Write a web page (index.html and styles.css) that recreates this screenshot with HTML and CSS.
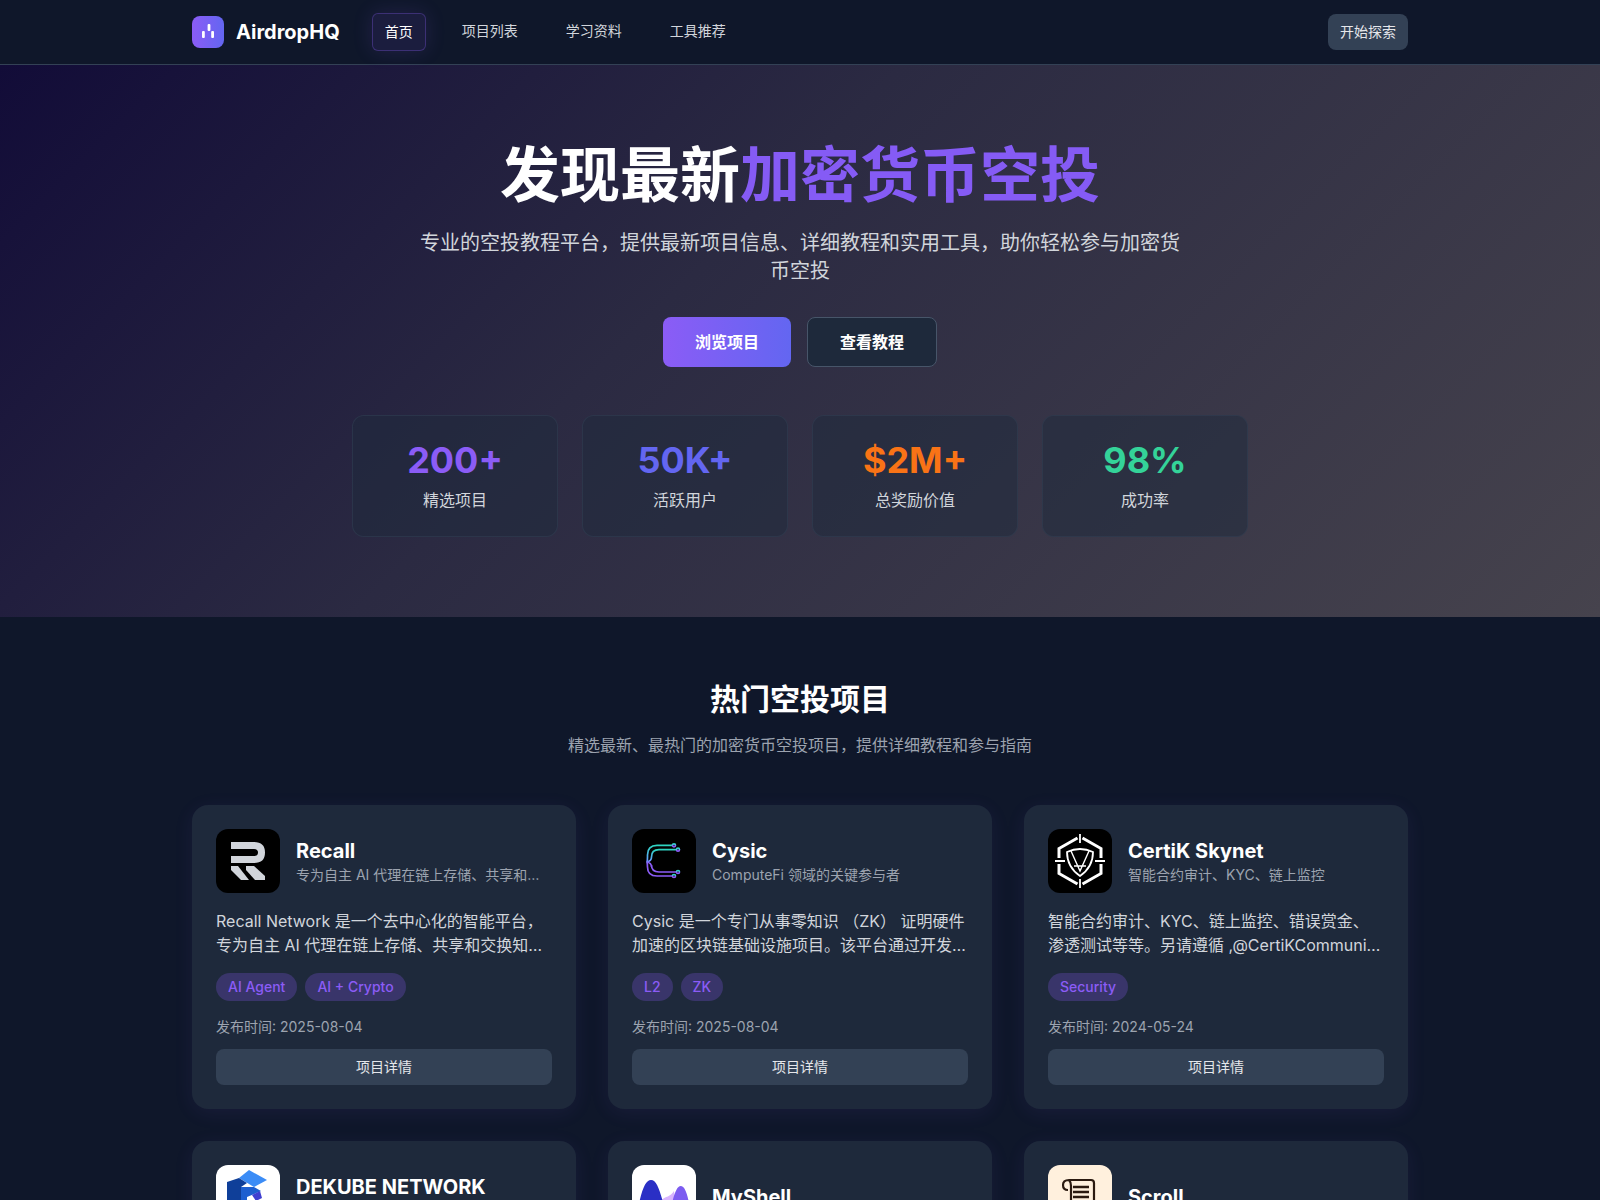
FILE: index.html
```html
<!DOCTYPE html>
<html lang="zh-CN">
<head>
  <meta charset="UTF-8">
  <meta name="viewport" content="width=device-width, initial-scale=1.0">
  <title>AirdropHQ</title>
  <link rel="stylesheet" href="styles.css">
</head>
<body>

  <nav class="topbar">
    <div class="container topbar-inner">
      <a class="brand" href="#">
        <span class="brand-mark">
          <svg viewBox="0 0 32 32" width="32" height="32">
            <rect x="10" y="15" width="2.8" height="7" rx="1" fill="#fff"/>
            <rect x="15.6" y="8" width="2.8" height="7" rx="1" fill="#fff"/>
            <rect x="19.2" y="15" width="2.8" height="7" rx="1" fill="#fff"/>
          </svg>
        </span>
        <span class="brand-name">AirdropHQ</span>
      </a>
      <div class="nav-links">
        <a class="nav-link active" href="#">首页</a>
        <a class="nav-link" href="#">项目列表</a>
        <a class="nav-link" href="#">学习资料</a>
        <a class="nav-link" href="#">工具推荐</a>
      </div>
      <a class="nav-cta" href="#">开始探索</a>
    </div>
  </nav>

  <header class="hero">
    <h1 class="hero-title">发现最新<span class="accent">加密货币空投</span></h1>
    <p class="hero-sub">专业的空投教程平台，提供最新项目信息、详细教程和实用工具，助你轻松参与加密货币空投</p>
    <div class="hero-actions">
      <a class="btn btn-primary" href="#">浏览项目</a>
      <a class="btn btn-dark" href="#">查看教程</a>
    </div>
    <div class="stats">
      <div class="stat"><div class="stat-num purple">200+</div><div class="stat-label">精选项目</div></div>
      <div class="stat"><div class="stat-num indigo">50K+</div><div class="stat-label">活跃用户</div></div>
      <div class="stat"><div class="stat-num orange">$2M+</div><div class="stat-label">总奖励价值</div></div>
      <div class="stat"><div class="stat-num green">98%</div><div class="stat-label">成功率</div></div>
    </div>
  </header>

  <main class="projects">
    <div class="container">
      <h2 class="section-title">热门空投项目</h2>
      <p class="section-sub">精选最新、最热门的加密货币空投项目，提供详细教程和参与指南</p>

      <div class="card-grid">

        <article class="card">
          <div class="card-head">
            <span class="icon icon-black">
              <svg viewBox="0 0 64 64" width="64" height="64">
                <path d="M15 16.5H38Q45.500 16.500 45.500 23.500T38 30.500H15" fill="none" stroke="#d1d5db" stroke-width="7"/>
                <path d="M15 37H22L33 51H25L15 41Z" fill="#d1d5db"/>
                <path d="M30 37H38L49 47V51H39L30 41Z" fill="#d1d5db"/>
              </svg>
            </span>
            <div class="card-titles">
              <h3 class="card-name">Recall</h3>
              <p class="card-tagline">专为自主 AI 代理在链上存储、共享和交换知识与数据</p>
            </div>
          </div>
          <p class="card-desc">Recall Network 是一个去中心化的智能平台，专为自主 AI 代理在链上存储、共享和交换知识与数据而设计，让代理之间可以协作。</p>
          <div class="tags"><span class="tag">AI Agent</span><span class="tag">AI + Crypto</span></div>
          <p class="card-date">发布时间: 2025-08-04</p>
          <a class="card-btn" href="#">项目详情</a>
        </article>

        <article class="card">
          <div class="card-head">
            <span class="icon icon-black">
              <svg viewBox="0 0 64 64" width="64" height="64">
                <defs>
                  <linearGradient id="cysic" x1="0" y1="0" x2="0" y2="1">
                    <stop offset="0" stop-color="#2dd4bf"/>
                    <stop offset="0.45" stop-color="#60a5fa"/>
                    <stop offset="0.6" stop-color="#8b5cf6"/>
                    <stop offset="1" stop-color="#8b5cf6"/>
                  </linearGradient>
                </defs>
                <g fill="none" stroke="url(#cysic)" stroke-width="1.700">
                  <path d="M40.500 16.300H25Q15.500 16.300 15.500 26V28Q15.500 31 15 33Q15.500 35 15.500 38V38Q15.500 47 25 47H40.500"/>
                  <path d="M44.500 20.700H27Q19.500 20.700 19.500 28V28Q19.500 32 15 33Q19.500 34 19.500 38V36Q19.500 43 27 43H44.500"/>
                  <circle cx="42" cy="16.300" r="1.500"/>
                  <circle cx="46" cy="20.700" r="1.500"/>
                  <circle cx="46" cy="43" r="1.500"/>
                  <circle cx="42" cy="47" r="1.500"/>
                </g>
              </svg>
            </span>
            <div class="card-titles">
              <h3 class="card-name">Cysic</h3>
              <p class="card-tagline">ComputeFi 领域的关键参与者</p>
            </div>
          </div>
          <p class="card-desc">Cysic 是一个专门从事零知识 （ZK） 证明硬件加速的区块链基础设施项目。该平台通过开发专用硬件和分布式算力网络来提升证明效率。</p>
          <div class="tags"><span class="tag">L2</span><span class="tag">ZK</span></div>
          <p class="card-date">发布时间: 2025-08-04</p>
          <a class="card-btn" href="#">项目详情</a>
        </article>

        <article class="card">
          <div class="card-head">
            <span class="icon icon-black">
              <svg viewBox="0 0 64 64" width="64" height="64">
                <g fill="none" stroke="#fff" stroke-width="3">
                  <path d="M29.500 9L11 19.500V29M34.500 9L53 19.500V29M11 35V44.500L29.500 55M53 35V44.500L34.500 55"/>
                  <path d="M32 5V14M32 50V59M7 32H17M47 32H57" stroke-width="1.800"/>
                </g>
                <g fill="none" stroke="#fff" stroke-width="1.800">
                  <path d="M19 23Q32 17 45 23Q45 38 32 47Q19 38 19 23Z"/>
                  <path d="M23 22L32 42L41 22M26 37H38" stroke-width="1.400"/>
                </g>
              </svg>
            </span>
            <div class="card-titles">
              <h3 class="card-name">CertiK Skynet</h3>
              <p class="card-tagline">智能合约审计、KYC、链上监控</p>
            </div>
          </div>
          <p class="card-desc">智能合约审计、KYC、链上监控、错误赏金、渗透测试等等。另请遵循 ,@CertiKCommunity 了解更多安全资讯和项目动态。</p>
          <div class="tags"><span class="tag">Security</span></div>
          <p class="card-date">发布时间: 2024-05-24</p>
          <a class="card-btn" href="#">项目详情</a>
        </article>

        <article class="card">
          <div class="card-head">
            <span class="icon icon-white">
              <svg viewBox="0 0 64 64" width="64" height="64">
                <path d="M33 5L51 15L38 22L23 13Z" fill="#3b8cf6"/>
                <path d="M11 17L23 13L31 18L25 22V52L11 45Z" fill="#0f3f99"/>
                <path d="M25 22L38 22L45 26L31 32V54L25 52Z" fill="#1d5fd0"/>
                <path d="M36 30L44 26L46 33L40 36Z" fill="#3f3fd0"/>
              </svg>
            </span>
            <div class="card-titles">
              <h3 class="card-name">DEKUBE NETWORK</h3>
              <p class="card-tagline">&nbsp;</p>
            </div>
          </div>
        </article>

        <article class="card">
          <div class="card-head">
            <span class="icon icon-white">
              <svg viewBox="0 0 64 64" width="64" height="64">
                <path d="M26 40C31 30 37 34 42 26L46 64H34Z" fill="#d8b4fe"/>
                <path d="M2 64C8 30 12 15 19 15C27 15 30 35 38 64Z" fill="#2a2fc5"/>
                <path d="M34 64C40 38 43 21 48.700 21C55 21 57 38 62 64Z" fill="#7c5cf0"/>
              </svg>
            </span>
            <div class="card-titles">
              <h3 class="card-name">MyShell</h3>
            </div>
          </div>
        </article>

        <article class="card">
          <div class="card-head">
            <span class="icon icon-cream">
              <svg viewBox="0 0 64 64" width="64" height="64">
                <g fill="none" stroke="#2b1a10" stroke-width="2.200">
                  <path d="M21 15H43Q46 15 46 18V44Q46 50 40 50H20"/>
                  <path d="M21 15Q15 15 15 20Q15 25 20 25M21 15Q23 17 23 21V44Q23 50 18 50"/>
                  <path d="M25 22H41M25 27H41M25 32H41" stroke-width="2.400"/>
                </g>
              </svg>
            </span>
            <div class="card-titles">
              <h3 class="card-name">Scroll</h3>
            </div>
          </div>
        </article>

      </div>
    </div>
  </main>

</body>
</html>
```

FILE: styles.css
```css
* {
  box-sizing: border-box;
}
html, body {
  height: 100%;
}
body {
  margin: 0;
  overflow: hidden;
  background: #0f172a;
  color: #fff;
  font-family: Inter, "Noto Sans CJK SC", sans-serif;
  font-size: 16px;
  line-height: 24px;
}
h1, h2, h3, p {
  margin: 0;
}
a {
  color: inherit;
  text-decoration: none;
}
.container {
  width: 1216px;
  margin: 0 auto;
}

/* top bar */
.topbar {
  height: 65px;
  background: #0f172a;
  border-bottom: 1px solid #334155;
}
.topbar-inner {
  height: 64px;
  display: flex;
  align-items: center;
}
.brand {
  display: flex;
  align-items: center;
  gap: 12px;
}
.brand-mark {
  width: 32px;
  height: 32px;
  display: block;
  border-radius: 8px;
  background: linear-gradient(to right, #8b5cf6, #6366f1);
}
.brand-mark svg {
  display: block;
}
.brand-name {
  font-size: 20px;
  line-height: 28px;
  font-weight: 700;
}
.nav-links {
  display: flex;
  align-items: flex-start;
  gap: 24px;
  margin-left: 32px;
}
.nav-link {
  padding: 8px 12px;
  font-size: 14px;
  line-height: 20px;
  color: #d1d5db;
  border-radius: 6px;
}
.nav-link.active {
  color: #fff;
  background: rgba(139, 92, 246, 0.1);
  border: 1px solid rgba(139, 92, 246, 0.3);
  box-shadow: 0 0 20px rgba(139, 92, 246, 0.15);
}
.nav-cta {
  margin-left: auto;
  padding: 8px 12px;
  font-size: 14px;
  line-height: 20px;
  color: #e5e7eb;
  background: #334155;
  border-radius: 8px;
}

/* hero */
.hero {
  height: 552px;
  padding-top: 80px;
  background: linear-gradient(135deg, #120c38 0%, #2b2a42 42%, #46434d 100%);
  display: flex;
  flex-direction: column;
  align-items: center;
}
.hero-title {
  font-size: 60px;
  line-height: 60px;
  font-weight: 700;
  margin-bottom: 24px;
}
.accent {
  color: #855bf5;
}
.hero-sub {
  width: 768px;
  font-size: 20px;
  line-height: 28px;
  text-align: center;
  color: #d1d5db;
  margin-bottom: 32px;
}
.hero-actions {
  display: flex;
  gap: 16px;
  margin-bottom: 48px;
}
.btn {
  padding: 13px 32px;
  font-weight: 600;
  border-radius: 8px;
  color: #fff;
}
.btn-primary {
  background: linear-gradient(to right, #8b5cf6, #6366f1);
}
.btn-dark {
  background: #1e293b;
  border: 1px solid #475569;
  padding: 12px 32px;
}
.stats {
  width: 896px;
  display: grid;
  grid-template-columns: repeat(4, 1fr);
  gap: 24px;
}
.stat {
  padding: 24px;
  text-align: center;
  background: rgba(30, 41, 59, 0.5);
  border: 1px solid rgba(51, 65, 85, 0.5);
  border-radius: 12px;
}
.stat-num {
  font-size: 36px;
  line-height: 40px;
  font-weight: 700;
  margin-bottom: 8px;
}
.stat-label {
  color: #d1d5db;
}
.purple { color: #8b5cf6; }
.indigo { color: #6366f1; }
.orange { color: #f97316; }
.green { color: #34d399; }

/* project cards */
.projects {
  padding-top: 64px;
}
.section-title {
  font-size: 30px;
  line-height: 36px;
  font-weight: 700;
  text-align: center;
  margin-bottom: 16px;
}
.section-sub {
  text-align: center;
  color: #9ca3af;
  margin-bottom: 48px;
}
.card-grid {
  display: grid;
  grid-template-columns: repeat(3, minmax(0, 1fr));
  gap: 32px;
}
.card {
  padding: 24px;
  background: #1e293b;
  border-radius: 16px;
  box-shadow: 0 4px 20px rgba(139, 92, 246, 0.08);
}
.card-head {
  display: flex;
  align-items: center;
  gap: 16px;
  margin-bottom: 16px;
}
.icon {
  flex: none;
  width: 64px;
  height: 64px;
  border-radius: 12px;
  overflow: hidden;
}
.icon svg {
  display: block;
}
.icon-black { background: #000; }
.icon-white { background: #fff; }
.icon-cream { background: #fff0dd; }
.card-titles {
  min-width: 0;
  flex: 1;
}
.card-name {
  font-size: 20px;
  line-height: 28px;
  font-weight: 700;
}
.card-tagline {
  font-size: 14px;
  line-height: 20px;
  color: #9ca3af;
  white-space: nowrap;
  overflow: hidden;
  text-overflow: ellipsis;
}
.card-desc {
  color: #d1d5db;
  display: -webkit-box;
  -webkit-box-orient: vertical;
  -webkit-line-clamp: 2;
  overflow: hidden;
  margin-bottom: 16px;
}
.tags {
  display: flex;
  gap: 8px;
  margin-bottom: 16px;
}
.tag {
  padding: 4px 12px;
  font-size: 14px;
  line-height: 20px;
  font-weight: 500;
  color: #8b5cf6;
  background: rgba(139, 92, 246, 0.25);
  border-radius: 999px;
}
.card-date {
  font-size: 14px;
  line-height: 20px;
  color: #9ca3af;
  margin-bottom: 12px;
}
.card-btn {
  display: block;
  padding: 8px 0;
  font-size: 14px;
  line-height: 20px;
  font-weight: 400;
  text-align: center;
  color: #e5e7eb;
  background: #334155;
  border-radius: 8px;
}
```
